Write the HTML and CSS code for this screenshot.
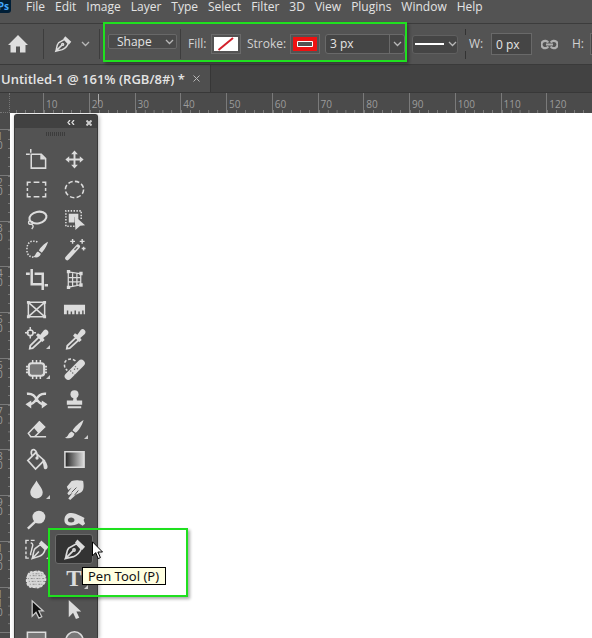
FILE: index.html
```html
<!DOCTYPE html>
<html lang="en">
<head>
<meta charset="utf-8">
<title>Untitled-1</title>
<link rel="stylesheet" href="styles.css">
</head>
<body>
<div class="app">
  <nav class="menubar">
    <span class="logo">Ps</span>
    <button>File</button><button>Edit</button><button>Image</button><button>Layer</button><button>Type</button><button>Select</button><button>Filter</button><button>3D</button><button>View</button><button>Plugins</button><button>Window</button><button>Help</button>
  </nav>

  <header class="options">
    <button class="home" aria-label="Home"><svg width="20" height="18" viewBox="0 0 20 18"><path fill="#dedede" d="M10 0 20 10H17.500V17.500H12V11.500H8V17.500H2.500V10H0Z"/></svg></button>
    <i class="sep"></i>
    <button class="preset" aria-label="Tool preset">
      <svg width="18" height="18" viewBox="0 0 24 24" fill="none" stroke="#dedede" stroke-width="1.900"><path d="M2.500 21.500C4 18 3 14 6 10.500L14 6l5 5.500C17 16 15 18 11 19.500ZM2.500 21.500l8-8"/><path fill="#dedede" stroke="none" d="m15 1.500 8 7.500-3 3.500L12.500 5Z"/><circle cx="11.500" cy="12.500" r="1.300"/></svg>
      <svg class="chev" width="9" height="6" viewBox="0 0 9 6"><path d="m1 1 3.500 3.500L8 1"/></svg>
    </button>
    <i class="sep"></i>
    <label class="mode"><select aria-label="Tool mode"><option>Shape</option></select><svg class="chev" width="9" height="6" viewBox="0 0 9 6"><path d="m1 1 3.500 3.500L8 1"/></svg></label>
    <i class="sep mid"></i>
    <label class="cap fill" for="fill">Fill:</label>
    <button class="swatch" id="fill"><svg width="26" height="16" viewBox="0 0 26 16"><path fill="#fff" d="M1 1h24v14H1z"/><path stroke="#d3202b" stroke-width="2" d="M5.500 14 20 2"/></svg></button>
    <label class="cap stroke" for="stroke">Stroke:</label>
    <button class="swatch" id="stroke"><svg width="26" height="16" viewBox="0 0 26 16"><path fill="#ee1111" d="M1 1h24v14H1z"/><path fill="#535353" stroke="#fff" d="M5.500 5.500h15v5h-15z"/></svg></button>
    <div class="width"><input aria-label="Stroke width" value="3 px"><button aria-label="Stroke width presets"><svg class="chev" width="9" height="6" viewBox="0 0 9 6"><path d="m1 1 3.500 3.500L8 1"/></svg></button></div>
    <button class="line" aria-label="Stroke type"><i></i><svg class="chev" width="9" height="6" viewBox="0 0 9 6"><path d="m1 1 3.500 3.500L8 1"/></svg></button>
    <i class="sep broken"></i>
    <label class="cap w" for="w">W:</label>
    <input class="size" id="w" value="0 px">
    <button class="link" aria-label="Link width and height"><svg width="17" height="11" viewBox="0 0 17 11" fill="none" stroke="#b0b0b0" stroke-width="2.200"><path d="M7.300 3.500A3.700 3.700 0 1 0 7.300 7.500M9.700 3.500A3.700 3.700 0 1 1 9.700 7.500M5 5.500h7"/></svg></button>
    <label class="cap h" for="h">H:</label>
    <input class="size" id="h" value="">
  </header>

  <div class="tabs"><div class="tab"><span>Untitled-1 @ 161% (RGB/8#) *</span><button aria-label="Close document"><svg width="7" height="7" viewBox="0 0 7 7"><path stroke="#b8b8b8" d="m.5.5 6 6m0-6-6 6"/></svg></button></div></div>

  <div class="hruler">
    <i class="corner"></i><i class="lead"></i>
    <span>10</span><span class="at">20</span><span>30</span><span>40</span><span>50</span><span>60</span><span>70</span><span>80</span><span>90</span><span>100</span><span>110</span><span>120</span>
  </div>

  <main class="work">
    <div class="vruler">
      <i class="lead"></i>
      <span>1<br>0</span><span>2<br>0</span><span>3<br>0</span><span>4<br>0</span><span>5<br>0</span><span>6<br>0</span><span>7<br>0</span><span>8<br>0</span><span>9<br>0</span><span>1<br>0<br>0</span><span>1<br>1<br>0</span><i class="tail"></i>
    </div>
    <div class="canvas"></div>

    <aside class="panel">
      <div class="title">
        <button aria-label="Collapse"><svg width="8" height="5" viewBox="0 0 8 5" fill="none" stroke="#ddd" stroke-width="1.300"><path d="M3 0 1 2.500 3 5M7 0 5 2.500 7 5"/></svg></button>
        <button aria-label="Close"><svg width="6" height="6" viewBox="0 0 6 6" stroke="#ccc" stroke-width="2"><path d="m.5.5 5 5m0-5-5 5"/></svg></button>
      </div>
      <div class="grip"></div>
      <div class="tools">
        <button aria-label="Artboard"><svg viewBox="0 0 24 24"><path d="M6 1v4M1 6.500h4M6.500 6.500H17l4.500 4.500v10h-15Z"/><path class="f" d="M16 6v6h6Z"/></svg></button>
        <button aria-label="Move"><svg viewBox="0 0 24 24"><path stroke-width="2" d="M12 5v14M5 12h14"/><path class="f" d="m12 2.500 3.500 4h-7ZM12 21.500l3.500-4h-7ZM2.500 12l4-3.500v7ZM21.500 12l-4-3.500v7Z"/></svg></button>
        <button aria-label="Rectangular marquee"><svg viewBox="0 0 24 24"><path d="M2.500 8V4.500H6M9 4.500h6M18 4.500h3.500V8M21.500 10.500v3M21.500 16v3.500H18M15 19.500H9M6 19.500H2.500V16M2.500 13.500v-3"/></svg></button>
        <button aria-label="Elliptical marquee"><svg viewBox="0 0 24 24"><ellipse cx="12" cy="12" rx="9.500" ry="8.500" stroke-dasharray="4.700 2.400"/></svg></button>
        <button aria-label="Lasso"><svg viewBox="0 0 24 24"><ellipse cx="13.500" cy="10" rx="9" ry="6" transform="rotate(-12 13.500 10)" stroke-width="2.200"/><path d="M6 13c-3 0-3 4 0 4 3 0 3-3 0-3M7 17c2 1 2 3 0 5" stroke-width="1.500"/></svg></button>
        <button aria-label="Object selection"><svg viewBox="0 0 24 24"><path stroke-dasharray="1.500 1.500" d="M12 19H3V3h16v10"/><path class="f" d="M6 6h10v6l-4-3v6H6Z"/><path class="f" d="m12 8 11 10-5 .5L13 23Z"/></svg></button>
        <button aria-label="Quick selection"><svg viewBox="0 0 24 24"><path stroke-dasharray="1.500 1.500" d="M13 4C7 2 2 4 2 12c0 6 3 8 8 8"/><path class="f" d="M24 4c-4 2-8 6-9.500 9l3 2.500C20 13 23 8 24 4ZM13.500 14l3 2.500c-1 4-5 4.500-8 3 3-1 2-4 5-5.500Z"/></svg></button>
        <button aria-label="Magic wand"><svg viewBox="0 0 24 24"><path stroke-width="4.500" stroke-linecap="round" d="M4.500 21 15.500 9"/><path stroke="#666" stroke-width="1.500" d="m12 12.500 3-3"/><path stroke-width="1.500" d="M10 1v5M7.500 3.500h5M20 1v5M17.500 3.500h5M21.500 9v4M19.500 11h4"/></svg></button>
        <button aria-label="Crop"><svg viewBox="0 0 24 24"><path stroke-width="2.600" d="M7 1v16h11M1 6h4M10 6h8.500v17M20.500 18H24"/></svg></button>
        <button aria-label="Perspective crop"><svg viewBox="0 0 24 24"><path stroke-width="1.300" d="M5.500 4 18.500 6v11.500L5.500 20ZM10 5v14M14.500 5.500v13M5.500 10h13M5.500 14.500h13"/><path class="f" d="M4 2h3.500v3.500H4ZM17 4h3.500v3.500H17ZM17 16h3.500v3.500H17ZM4 18.500h3.500V22H4Z"/></svg></button>
        <button aria-label="Frame"><svg viewBox="0 0 24 24"><path d="M3.500 4.500h17v15h-17ZM3.500 4.500l17 15m0-15-17 15"/><path class="f" d="M2 3h3v3H2ZM19 3h3v3h-3ZM2 18h3v3H2ZM19 18h3v3h-3Z"/></svg></button>
        <button aria-label="Ruler"><svg viewBox="0 0 24 24"><path class="f" d="M1 7h22v10h-1.500v-4H20v4h-2.500v-3H16v3h-2.500v-4H12v4H9.500v-3H8v3H5.500v-4H4v4H1Z"/></svg></button>
        <button class="more" aria-label="Color sampler"><svg viewBox="0 0 24 24"><circle cx="5.500" cy="5" r="3"/><path stroke-width="1.500" d="M5.500-1v4M5.500 7v4M0 5h4M7.500 5h4"/><path stroke-width="1.900" d="m15 9-9.500 9.500-.5 3 3-.5L18 12Z"/><path class="f" d="m11.500 7.500 2-2 2.500 1.500 3.500-4.500q2-2 4 0t0 4.500L19 10.500l1.500 2-2.500 2Z"/></svg></button>
        <button aria-label="Eyedropper"><svg viewBox="0 0 24 24"><path stroke-width="1.900" d="m14 9.500-9.500 9-.5 3 3-.5 10-9Z"/><path class="f" d="m10.500 8 2-2.500L15 7l3.500-5q2-2 4 0t0 4.500L18 10.500l1.500 2-2.500 2Z"/></svg></button>
        <button class="more" aria-label="Patch"><svg viewBox="0 0 24 24"><rect x="4" y="5.500" width="16" height="13" rx="3" stroke-width="2.200" fill="#777"/><path stroke-width="1.600" d="M8 2v4M12 2v4M16 2v4M8 18v4M12 18v4M16 18v4M1 9h4M1 12h4M1 15h4M19 9h4M19 12h4M19 15h4"/></svg></button>
        <button aria-label="Healing brush"><svg viewBox="0 0 24 24"><path stroke-dasharray="3 2" d="M13 3C8-1 1 2 1.500 7c0 3 1 4 3 6"/><path stroke-width="7.500" stroke-linecap="round" d="M5.500 19 19 5.500"/><path stroke="#777" stroke-width="1.300" stroke-dasharray="1.500 1.500" d="m7.500 13 4.500 4.500M12.500 8.500l4.500 4.500M12 11v3"/></svg></button>
        <button aria-label="Content-aware move"><svg viewBox="0 0 24 24"><path stroke-width="2.600" d="M2 6c12-1 8 11 18 11M22 6C10 5 14 17 4 17"/><path class="f" d="m6.500 13-6 4 6 4.500ZM17.500 13l6 4-6 4.500Z"/></svg></button>
        <button aria-label="Clone stamp"><svg viewBox="0 0 24 24"><circle class="f" cx="12" cy="6.500" r="4.200"/><path class="f" d="M11 9h3l.5 4H20v4.500H4V13h6.500ZM5 19h14v2H5Z"/></svg></button>
        <button aria-label="Eraser"><svg viewBox="0 0 24 24"><path d="M3.500 16 15 4l5.500 5.500L10 19.500H6ZM10 19.500h12"/><path class="f" d="m9 10 6-7 6 6.500-7 6.500Z"/></svg></button>
        <button class="more" aria-label="Brush"><svg viewBox="0 0 24 24"><path class="f" d="M21.500 2C17 5 12 9 10 13l3 2.500C17 13 20 7 21.500 2ZM9 14l3 2.500C11 21 6 22 2 20.500c4-1 3-5 7-6.500Z"/></svg></button>
        <button aria-label="Paint bucket"><svg viewBox="0 0 24 24"><path stroke-width="1.800" d="m11 5 9 8-9 9-8-9ZM8 9c-3-5-1-8 2-7 2 1 3 5 3 9"/><path class="f" d="M18 12c3 0 5 4 5.500 7 .5 4-4 4-4 1Z"/><circle class="f" cx="12.500" cy="10.500" r="1.700"/></svg></button>
        <button aria-label="Gradient"><svg viewBox="0 0 24 24"><defs><linearGradient id="g"><stop stop-color="#222"/><stop offset="1" stop-color="#ddd"/></linearGradient></defs><path fill="url(#g)" d="M2 4h20v16H2Z"/></svg></button>
        <button class="more" aria-label="Blur"><svg viewBox="0 0 24 24"><path class="f" d="M12 2.500c2 4 6.500 8.500 6.500 12.500a6.500 6.500 0 0 1-13 0c0-4 4.500-8.500 6.500-12.500Z"/></svg></button>
        <button aria-label="Smudge"><svg viewBox="0 0 24 24"><path class="f" d="M9 3c4-1 7-.5 12 0 1 6 1 10-3 12.500l-4.500 2-6 5.500-2-1.500 4.500-6-4 2.500-1.500-2L9 10l-3.500 2.500L4 9Z"/><path stroke="#535353" stroke-width="1" d="m9 15 5-5M12 18l4-5"/></svg></button>
        <button aria-label="Dodge"><svg viewBox="0 0 24 24"><circle class="f" cx="14.500" cy="9.500" r="6.700"/><path stroke-width="2.600" d="m11 14-8 7.500"/></svg></button>
        <button aria-label="Burn"><svg viewBox="0 0 24 24"><path class="f" fill-rule="evenodd" d="M1.500 12C2 5 8 4 13 6l6 2.500 3.500 2-1 2 1.500 4-2.500 2-4-2.500C9 20 1 19 1.500 12ZM5 12.500c0 3.500 7 3.500 7 0s-7-3.500-7 0Z"/></svg></button>
        <button class="more" aria-label="Content-aware tracing"><svg viewBox="0 0 24 24"><path stroke-width="1.500" d="M1 6V2.500h3M6 2.500h4M1 9v3M1 14v3M1 18.500V21h3M6 5c4 1 1 5 1 7s-2 4-1 6"/><path d="M7.500 21.500C9 18 8 14 10.500 11L16 7l5 5c-1 4-3 6-6 7ZM7.500 21.500l7-7.500"/><path class="f" d="m17 2.500 7.500 7-2.500 3L14.500 6Z"/></svg></button>
        <button class="active" aria-label="Pen"><svg viewBox="0 0 24 24"><path stroke-width="1.800" d="M2.500 21.500C4 18 3 14 6 10.500L14 6l5 5.500C17 16 15 18 11 19.500ZM2.500 21.500l8-8"/><path class="f" d="m15 1.500 8 7.500-3 3.500L12.500 5Z"/><circle cx="11.500" cy="12.500" r="1.200"/></svg></button>
        <button aria-label="Sponge"><svg viewBox="0 0 24 24"><path fill="#d6d6d6" stroke-dasharray="3 1" d="M3 8Q4 3 10 4q7-2 10 3 3 5 0 9-4 6-10 4-7 1-8-5-1-3 1-7Z"/><path stroke="#8a8a8a" stroke-width="1" stroke-dasharray="1 2 2 1" d="M5 8h15M3 11h18M4 14h17M5 17h13M8 6h10"/></svg></button>
        <button class="more" aria-label="Type"><b>T</b></button>
        <button aria-label="Path selection"><svg viewBox="0 0 24 24"><path fill="#111" stroke="#ccc" stroke-width="1.300" d="M7.500 3v16l4-4 3 6 3-1.500-3-6H19Z"/></svg></button>
        <button aria-label="Direct selection"><svg viewBox="0 0 24 24"><path class="f" d="M6 2v18l4.500-4.500 3 6.500 3.500-1.500-3-6.500H19Z"/></svg></button>
        <button aria-label="Rectangle"><svg viewBox="0 0 24 24"><path fill="#777" d="M2.500 4.500h19v16h-19Z"/></svg></button>
        <button aria-label="Ellipse"><svg viewBox="0 0 24 24"><circle fill="#777" cx="12" cy="13" r="9"/></svg></button>
      </div>
    </aside>
  </main>

  <div class="mark top"></div>
  <div class="mark pen"></div>
  <div class="tip" role="tooltip">Pen Tool (P)</div>
  <svg class="cursor" width="12" height="19" viewBox="0 0 12 19"><path fill="#fff" stroke="#000" d="M.5.800v14l3.200-3.200 2.500 6 2.200-1-2.500-5.600h4.600Z"/></svg>
</div>
</body>
</html>
```
FILE: styles.css
```css
* { box-sizing: border-box; }
body { margin: 0; background: #535353; font: 12px/16px "Open Sans", "Noto Sans", sans-serif; color: #e4e4e4; }
button, input, select { font: inherit; color: inherit; background: none; border: 0; margin: 0; padding: 0; border-radius: 0; }
.app { position: relative; display: flex; flex-direction: column; height: 100vh; overflow: hidden; }
.chev { fill: none; stroke: #b8b8b8; stroke-width: 1.3; flex: none; }

.menubar { display: flex; align-items: flex-start; gap: 10px; height: 24px; border-bottom: 1px solid #3c3c3c; flex: none; white-space: nowrap; line-height: 14px; }
.logo { width: 11px; height: 13px; margin-right: 5px; background: #001e36; color: #41a9ff; font-size: 10px; font-weight: 700; line-height: 13px; display: flex; justify-content: flex-end; padding-right: 2px; border-radius: 0 0 3px 0; }

.options { display: flex; align-items: center; height: 41px; border-bottom: 1px solid #3a3a3a; flex: none; white-space: nowrap; overflow: hidden; }
.options > * { flex: none; }
.options svg { display: block; }
.home { margin: 0 15px 0 8px; }
.sep { width: 1px; height: 30px; background: #3d3d3d; }
.preset { display: flex; align-items: center; gap: 9px; margin: 0 9px 0 10px; }
.mode { position: relative; margin: 0 3px 6px 8px; }
.mode select { display: block; appearance: none; width: 69px; height: 15px; padding-left: 8px; background: #4a4a4a; border: 1px solid #686868; border-radius: 2px; line-height: 13px; }
.mode .chev { position: absolute; right: 3px; top: 5px; }
.cap { color: #d2d2d2; }
.fill { width: 23px; margin-left: 7px; }
.stroke { width: 43px; margin-left: 6px; }
.swatch { width: 30px; height: 20px; border: 1px solid #6a6a6a; display: grid; place-items: center; }
.width { display: flex; width: 80px; height: 20px; margin: 0 7px 0 5px; background: #454545; border: 1px solid #696969; border-radius: 3px; }
.width input { flex: 1; min-width: 0; padding-left: 4px; }
.width button { width: 15px; border-left: 1px solid #696969; display: grid; place-items: center; }
.line { display: flex; align-items: center; gap: 4px; width: 46px; height: 19px; padding-left: 2px; background: #454545; border: 1px solid #606060; border-radius: 3px; }
.line i { width: 29px; height: 2px; background: #fff; }
.broken { margin-left: 7px; background: linear-gradient(#333 6px, #535353 6px 22px, #333 22px); }
.w { width: 22px; margin-left: 3px; }
.size { width: 41px; height: 22px; padding-left: 4px; background: #454545; border: 1px solid #696969; }
.link { margin: 0 14px 0 9px; }
.h { width: 18px; }

.tabs { display: flex; height: 28px; background: #424242; border-bottom: 1px solid #383838; flex: none; }
.tab { display: flex; align-items: center; gap: 8px; padding: 0 10px 0 1px; background: #4f4f4f; border-right: 1px solid #363636; font-size: 13px; font-weight: 600; white-space: nowrap; }
.tab svg { display: block; }

.hruler { display: flex; height: 20px; background: #4b4b4b; color: #9b9b9b; flex: none; font-size: 10px; line-height: 22px; overflow: hidden; }
.hruler .corner { width: 10px; border-right: 1px dotted #777; border-bottom: 1px dotted #777; }
.hruler .lead { width: 33px; background: repeating-linear-gradient(to left, transparent 0 8px, #7a7a7a 8px 9px) bottom / 100% 3px no-repeat; }
.hruler span { flex: 1 1 0; min-width: 0; padding-left: 2px; border-left: 1px solid #7a7a7a; background: linear-gradient(to right, #7a7a7a 1px, transparent 1px) left bottom / 20% 3px repeat-x; }
.hruler .at { background: linear-gradient(#aaa, #aaa) 8px 1px / 1px 10px no-repeat, linear-gradient(to right, #7a7a7a 1px, transparent 1px) left bottom / 20% 3px repeat-x; }

.work { position: relative; display: flex; flex: 1; min-height: 0; }
.vruler { display: flex; flex-direction: column; width: 10px; background: #4b4b4b; color: #9b9b9b; font-size: 10px; line-height: 9px; overflow: hidden; }
.vruler .lead { height: 16px; }
.vruler span { flex: 9 1 0; min-height: 0; padding-top: 2px; text-indent: -3px; border-top: 1px solid #7a7a7a; background: linear-gradient(#7a7a7a 1px, transparent 1px) right top / 2px 20% repeat-y; }
.vruler span { margin-left: -3px; text-indent: 0; }
.vruler .tail { flex: 1 1 0; border-top: 1px solid #7a7a7a; }
.canvas { flex: 1; background: #fff; }

.panel { position: absolute; left: 14px; top: 1px; bottom: 0; width: 84px; overflow: hidden; background: #535353; border: 1px solid #393939; border-bottom: 0; border-radius: 3px 3px 0 0; box-shadow: 1px 1px 4px #0005; }
.title { display: flex; align-items: center; justify-content: flex-end; gap: 11px; height: 13px; padding: 2px 5px 0 0; background: #414141; }
.title svg { display: block; }
.grip { width: 20px; height: 4px; margin: 4px auto 8px; background: repeating-linear-gradient(to right, #3c3c3c 0 1px, transparent 1px 2px); }
.tools { display: grid; grid-template-columns: 38px 38px; grid-auto-rows: 30px; padding-left: 2px; }
.tools button { position: relative; display: grid; place-items: center; }
.tools svg { width: 23px; height: 23px; fill: none; stroke: #dcdcdc; stroke-width: 1.6; overflow: visible; }
.tools .f { fill: #dcdcdc; stroke: none; }
.tools b { font: 700 23px/24px "Liberation Serif", serif; color: #dcdcdc; }
.more::after { content: ""; position: absolute; right: 5px; bottom: 5px; border: 2px solid; border-color: transparent #ccc #ccc transparent; }
.tools .active { background: #333; border: 1px solid #6a6a6a; border-radius: 3px; }

.mark { position: absolute; border: 2px solid #1fe01f; box-shadow: 2px 2px 3px #0005; }
.mark.top { left: 103px; top: 22px; width: 304px; height: 40px; }
.mark.pen { left: 48px; top: 528px; width: 140px; height: 69px; }
.tip { position: absolute; left: 82px; top: 567px; padding: 0 6px 0 5px; border: 1px solid #000; background: #ffffe1; color: #111; font: 13px/16px "Noto Sans", sans-serif; white-space: nowrap; }
.cursor { position: absolute; left: 92px; top: 541px; }
```
